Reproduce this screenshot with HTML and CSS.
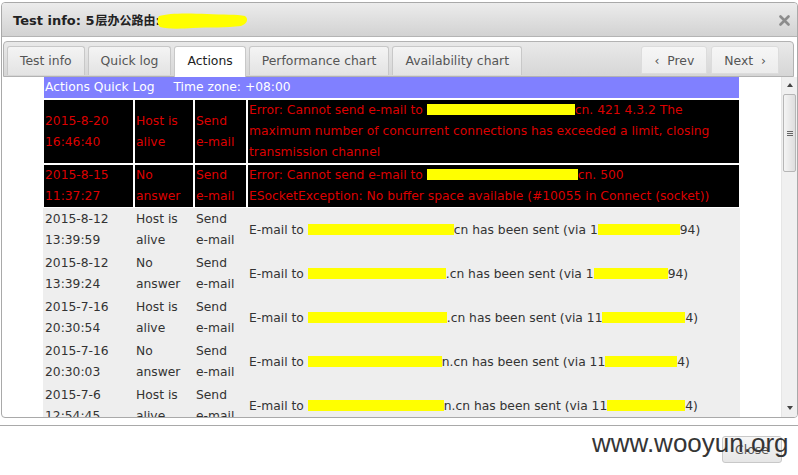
FILE: index.html
```html
<!DOCTYPE html>
<html>
<head>
<meta charset="utf-8">
<title>Test info</title>
<link rel="stylesheet" href="styles.css">
</head>
<body>
<div class="dialog">
  <div class="titlebar">
    <span class="title">Test info: 5<span class="cjk">层办公路由</span>: 1</span>
    <svg class="blob" width="92" height="18" viewBox="0 0 92 18"><path d="M2 4 C12 1 30 1 50 2 C66 3 80 2 88 4 C92 7 90 12 84 14 C70 16 52 15 36 16 C22 17 10 17 3 15 C0 12 0 7 2 4 Z" fill="#ffff00"/></svg>
    <span class="xbtn"><svg width="11" height="11" viewBox="0 0 11 11"><path d="M1.5 1.5 L9.5 9.5 M9.5 1.5 L1.5 9.5" stroke="#8c8c8c" stroke-width="2.6" stroke-linecap="round"/></svg></span>
  </div>
  <div class="tabs">
    <span class="tab">Test info</span>
    <span class="tab">Quick log</span>
    <span class="tab active">Actions</span>
    <span class="tab">Performance chart</span>
    <span class="tab">Availability chart</span>
    <span class="nav">
      <span class="navbtn">&lsaquo;&nbsp;&nbsp;Prev</span>
      <span class="navbtn">Next&nbsp;&nbsp;&rsaquo;</span>
    </span>
  </div>
  <div class="content">
    <div class="pane">
      <table class="log">
        <tr class="hdr"><td colspan="4">Actions Quick Log<span class="tz">Time zone: +08:00</span></td></tr>
        <tr class="err">
          <td class="c1">2015-8-20<br>16:46:40</td>
          <td class="c2">Host is<br>alive</td>
          <td class="c3">Send<br>e-mail</td>
          <td class="c4">Error: Cannot send e-mail to <span class="rd w148"></span>cn. 421 4.3.2 The<br>maximum number of concurrent connections has exceeded a limit, closing<br>transmission channel</td>
        </tr>
        <tr class="err">
          <td class="c1">2015-8-15<br>11:37:27</td>
          <td class="c2">No<br>answer</td>
          <td class="c3">Send<br>e-mail</td>
          <td class="c4">Error: Cannot send e-mail to <span class="rd w151"></span>cn. 500<br>ESocketException: No buffer space available (#10055 in Connect (socket))</td>
        </tr>
        <tr class="ok">
          <td class="c1">2015-8-12<br>13:39:59</td>
          <td class="c2">Host is<br>alive</td>
          <td class="c3">Send<br>e-mail</td>
          <td class="c4">E-mail to <span class="rd w146"></span>cn has been sent (via 1<span class="rd w82"></span>94)</td>
        </tr>
        <tr class="ok">
          <td class="c1">2015-8-12<br>13:39:24</td>
          <td class="c2">No<br>answer</td>
          <td class="c3">Send<br>e-mail</td>
          <td class="c4">E-mail to <span class="rd w138"></span>.cn has been sent (via 1<span class="rd w74"></span>94)</td>
        </tr>
        <tr class="ok">
          <td class="c1">2015-7-16<br>20:30:54</td>
          <td class="c2">Host is<br>alive</td>
          <td class="c3">Send<br>e-mail</td>
          <td class="c4">E-mail to <span class="rd w139"></span>.cn has been sent (via 11<span class="rd w83"></span>4)</td>
        </tr>
        <tr class="ok">
          <td class="c1">2015-7-16<br>20:30:03</td>
          <td class="c2">No<br>answer</td>
          <td class="c3">Send<br>e-mail</td>
          <td class="c4">E-mail to <span class="rd w134"></span>n.cn has been sent (via 11<span class="rd w72"></span>4)</td>
        </tr>
        <tr class="ok">
          <td class="c1">2015-7-6<br>12:54:45</td>
          <td class="c2">Host is<br>alive</td>
          <td class="c3">Send<br>e-mail</td>
          <td class="c4">E-mail to <span class="rd w136"></span>n.cn has been sent (via 11<span class="rd w78"></span>4)</td>
        </tr>
      </table>
    </div>
    <div class="scrollbar">
      <span class="arrow up"></span>
      <span class="thumb"><span class="grip"></span></span>
      <span class="track"></span>
      <span class="arrow down"></span>
    </div>
  </div>
</div>
<div class="buttonpane">
  <span class="closebtn">Close</span>
</div>
<div class="watermark">www.wooyun.org</div>
</body>
</html>
```
FILE: styles.css
```css
* { box-sizing: border-box; }
html, body { margin: 0; padding: 0; background: #fff; }
body {
  width: 798px;
  height: 475px;
  overflow: hidden;
  position: relative;
  font-family: "DejaVu Sans", Verdana, "Noto Sans CJK SC", sans-serif;
}
.dialog {
  margin: 2px 0 0 1px;
  width: 797px;
  height: 416px;
  border: 1px solid #a9a9a9;
  border-radius: 4px;
  display: flex;
  flex-direction: column;
  overflow: hidden;
  background: #fff;
}
.titlebar {
  position: relative;
  flex: none;
  height: 34px;
  display: flex;
  align-items: center;
  padding: 0 7px 0 11px;
  background: linear-gradient(#ececec, #d2d2d2);
  border-bottom: 1px solid #b4b4b4;
  border-radius: 3px 3px 0 0;
}
.title {
  font-weight: bold;
  font-size: 13px;
  color: #222;
  font-family: "DejaVu Sans", Verdana, "Noto Sans CJK SC", sans-serif;
}
.cjk { font-size: 12px; font-family: "Noto Sans CJK SC", sans-serif; margin-left: 1px; }
.blob { position: absolute; left: 155px; top: 9px; }
.xbtn { margin-left: auto; display: flex; margin-top: 1px; }
.tabs {
  flex: none;
  margin: 4px 3px 0 1px;
  height: 36px;
  border: 1px solid #b2b2b2;
  border-radius: 4px 4px 0 0;
  background: linear-gradient(#e9e9e9, #d6d6d6);
  padding: 4px 0 0 3px;
  display: flex;
  align-items: flex-start;
}
.tab {
  height: 29px;
  line-height: 28px;
  padding: 0 12px;
  margin-right: 3px;
  border: 1px solid #c8c8c8;
  border-bottom: none;
  border-radius: 3px 3px 0 0;
  background: linear-gradient(#f4f4f4, #e3e3e3);
  color: #555;
  font-size: 12.4px;
}
.tab.active {
  height: 31px;
  background: #fff;
  color: #222;
  position: relative;
  z-index: 1;
}
.nav { margin-left: auto; margin-right: 14px; display: flex; gap: 4px; }
.navbtn {
  height: 28px;
  line-height: 27px;
  padding: 0 12px;
  border: 1px solid #dcdcdc;
  border-radius: 3px 3px 0 0;
  background: linear-gradient(#f6f6f6, #ececec);
  color: #555;
  font-size: 12.4px;
}
.content { flex: 1; display: flex; min-height: 0; }
.pane { flex: 1; overflow: hidden; padding-left: 41px; }
.log {
  border-collapse: separate;
  border-spacing: 0;
  width: 697px;
  font-size: 12.3px;
  line-height: 21px;
  margin-top: -1px;
}
.log td {
  border: 1px solid #fff;
  padding: 0 1px;
  vertical-align: middle;
  white-space: nowrap;
}
.hdr td { background: #8080ff; color: #fff; }
.tz { margin-left: 19px; }
.err td { background: #000; color: #dc0000; }
.ok td { background: #eeeeee; border-color: #eeeeee; color: #333; }
.c1 { width: 91px; }
.c2 { width: 60px; }
.c3 { width: 53px; }
.c4 { width: 493px; }
.rd {
  display: inline-block;
  height: 11px;
  background: #ffff00;
  vertical-align: -1px;
}
.w72 { width: 72px; }
.w74 { width: 74px; }
.w78 { width: 78px; }
.w82 { width: 82px; }
.w83 { width: 83px; }
.w134 { width: 134px; }
.w136 { width: 136px; }
.w138 { width: 138px; }
.w139 { width: 139px; }
.w146 { width: 146px; }
.w148 { width: 148px; }
.w151 { width: 151px; }
.scrollbar {
  flex: none;
  width: 16px;
  background: #f0f0f0;
  border-left: 1px solid #e6e6e6;
  display: flex;
  flex-direction: column;
  align-items: center;
}
.arrow { flex: none; width: 0; height: 0; border-left: 3.5px solid transparent; border-right: 3.5px solid transparent; }
.arrow.up { border-bottom: 4px solid #444; margin-top: 6px; }
.arrow.down { border-top: 4px solid #444; margin-bottom: 7px; }
.thumb {
  flex: none;
  margin-top: 7px;
  width: 13px;
  height: 78px;
  border: 1px solid #b6b6b6;
  border-radius: 2px;
  background: linear-gradient(90deg, #f4f4f4, #dedede);
  display: flex;
  align-items: center;
  justify-content: center;
}
.grip {
  width: 6px;
  height: 5px;
  border-top: 1px solid #666;
  border-bottom: 1px solid #666;
  background: linear-gradient(#666, #666) center / 6px 1px no-repeat;
}
.track { flex: 1; }
.buttonpane {
  margin-top: 7px;
  border-top: 1px solid #a9a9a9;
  height: 49px;
  display: flex;
  justify-content: flex-end;
  padding: 10px 16px 0 0;
}
.closebtn {
  width: 60px;
  height: 27px;
  line-height: 25px;
  text-align: center;
  border: 1px solid #c8c8c8;
  border-radius: 3px;
  background: linear-gradient(#f6f6f6, #e6e6e6);
  color: #555;
  font-size: 12.4px;
}
.watermark {
  position: absolute;
  left: 592px;
  top: 430px;
  font-family: "Liberation Sans", Arial, sans-serif;
  font-size: 26px;
  line-height: 26px;
  color: #353535;
}
```
